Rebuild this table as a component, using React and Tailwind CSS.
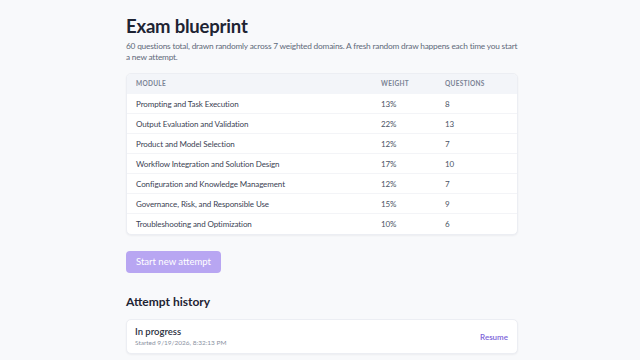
import React from 'react';

const modules = [
  { name: 'Prompting and Task Execution', weight: '13%', count: 8 },
  { name: 'Output Evaluation and Validation', weight: '22%', count: 13 },
  { name: 'Product and Model Selection', weight: '12%', count: 7 },
  { name: 'Workflow Integration and Solution Design', weight: '17%', count: 10 },
  { name: 'Configuration and Knowledge Management', weight: '12%', count: 7 },
  { name: 'Governance, Risk, and Responsible Use', weight: '15%', count: 9 },
  { name: 'Troubleshooting and Optimization', weight: '10%', count: 6 },
];

export default function App() {
  return (
    <div
      className="min-h-screen bg-[#f8f9fb] text-[#1e2433]"
      style={{ fontFamily: 'Lato, "Noto Sans", sans-serif' }}
    >
      <div className="pl-[126px] pr-[122px] pt-[14px] pb-4">
        <h1 className="text-[18.5px] leading-[24px] font-bold tracking-[-0.2px]">Exam blueprint</h1>
        <p className="mt-[3px] text-[8.3px] leading-[11px] tracking-[-0.2px] text-[#5f697a]">
          60 questions total, drawn randomly across 7 weighted domains. A fresh random draw happens each time you start a new attempt.
        </p>

        <div className="mt-[10px] bg-white rounded-[5px] border border-[#eceef3] shadow-[0_1px_2px_rgba(15,23,42,0.05)] overflow-hidden">
          <div className="flex h-[20px] items-center bg-[#f3f5f9] text-[6.5px] font-bold tracking-[0.3px] text-[#7a8394] uppercase">
            <div className="w-[254px] pl-[9px]">Module</div>
            <div className="w-[64px]">Weight</div>
            <div className="flex-1">Questions</div>
          </div>
          {modules.map((m, i) => (
            <div
              key={m.name}
              className={`flex h-[20px] items-center text-[8px] tracking-[-0.1px] text-[#3a4253] ${
                i < modules.length - 1 ? 'border-b border-[#f3f4f7]' : ''
              }`}
            >
              <div className="w-[254px] pl-[9px]">{m.name}</div>
              <div className="w-[64px] text-[#4b5365]">{m.weight}</div>
              <div className="flex-1 text-[#4b5365]">{m.count}</div>
            </div>
          ))}
        </div>

        <button className="mt-[16px] h-[22px] px-[10px] rounded-[4px] bg-[#b8a6f2] text-white text-[9.5px] leading-none">
          Start new attempt
        </button>

        <h2 className="mt-[21px] text-[12px] leading-[16px] font-bold">Attempt history</h2>

        <div className="mt-[9px] flex items-center justify-between bg-white rounded-[5px] border border-[#eceef3] shadow-[0_1px_2px_rgba(15,23,42,0.05)] px-[8px] h-[35px]">
          <div>
            <div className="text-[9.5px] leading-[12px] font-semibold text-[#2a3040]">In progress</div>
            <div className="text-[6.5px] leading-[9px] text-[#8a92a1]">Started 9/19/2026, 8:32:13 PM</div>
          </div>
          <button className="text-[8px] font-semibold text-[#7b5fd9] pr-[1px]">Resume</button>
        </div>
      </div>
    </div>
  );
}
